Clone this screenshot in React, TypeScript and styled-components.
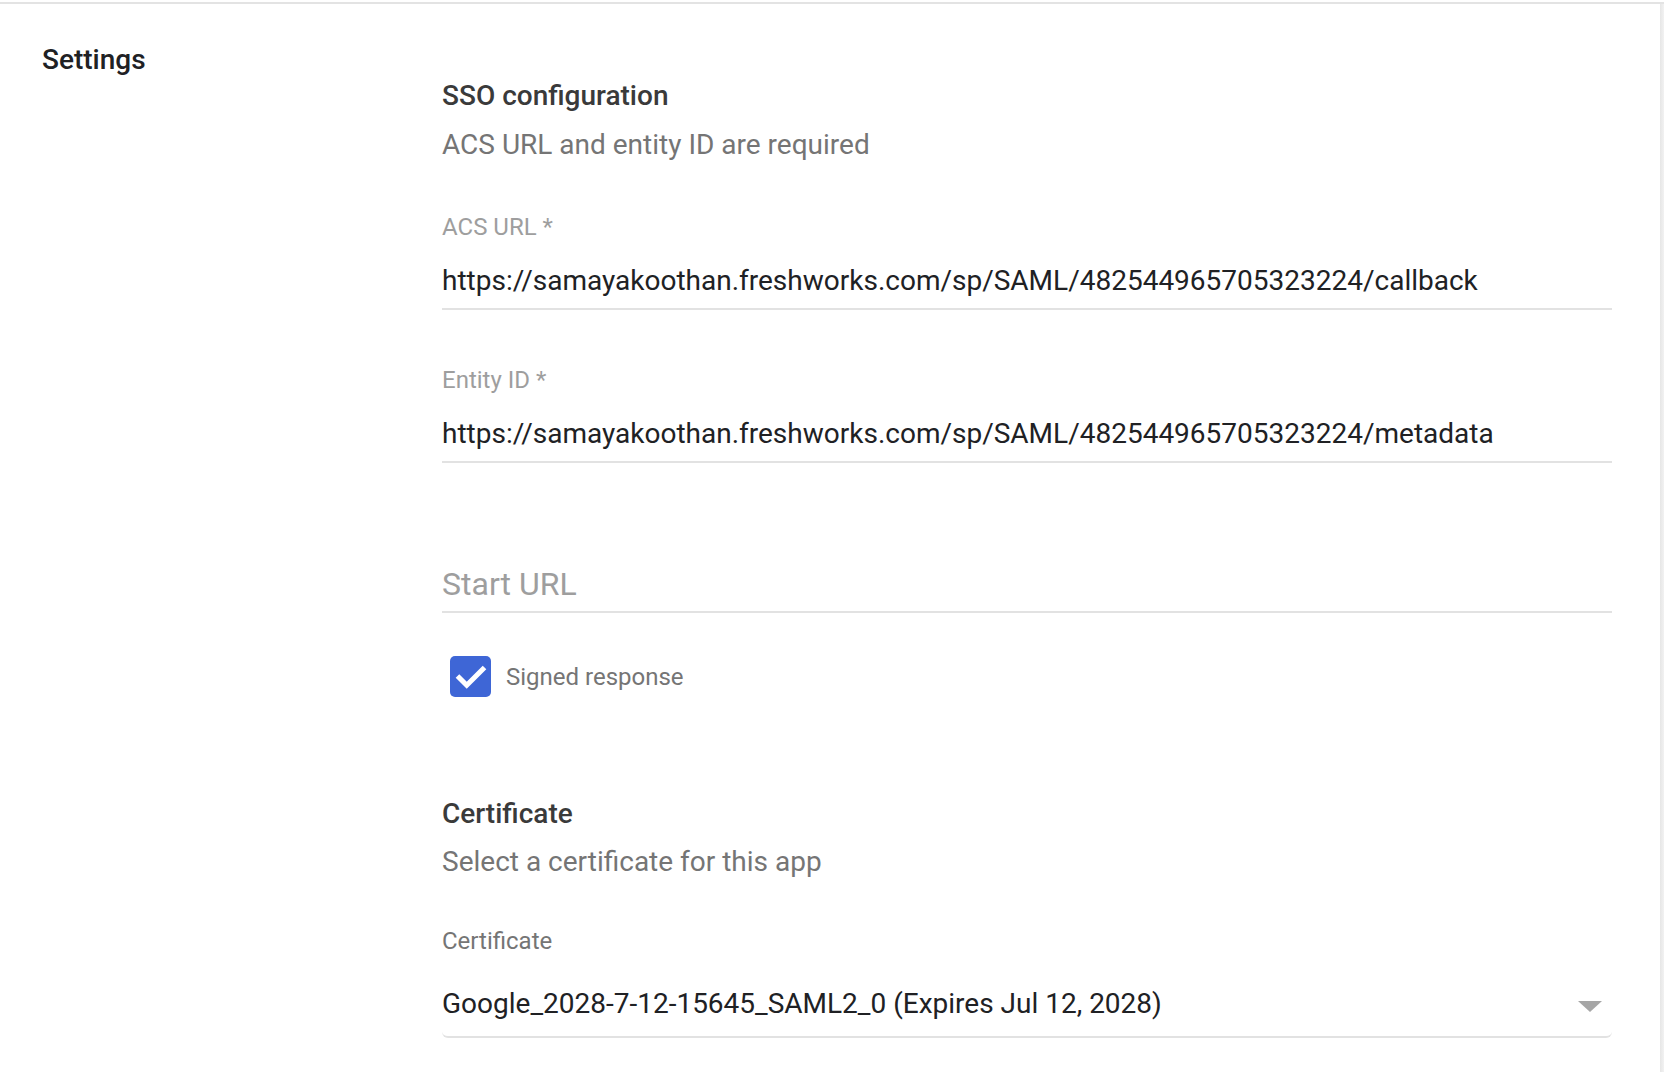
import React from "react";
import styled, { createGlobalStyle } from "styled-components";

const Global = createGlobalStyle`
  html, body { margin: 0; padding: 0; background: #ffffff; }
  body { font-family: Roboto, "Liberation Sans", Arial, sans-serif; -webkit-font-smoothing: antialiased; }
  * { box-sizing: border-box; }
`;

const Card = styled.div`
  margin-top: 2px;
  width: 1664px;
  min-height: 1070px;
  border-top: 2px solid #e3e3e3;
  display: flex;
  position: relative;
  &::after {
    content: "";
    position: absolute;
    top: 0;
    bottom: 0;
    left: 1660px;
    width: 4px;
    background: linear-gradient(to right, #e6e6e6, #f2f2f2);
  }
`;

const SideColumn = styled.div`
  width: 442px;
  padding: 40px 0 0 42px;
  flex-shrink: 0;
`;

const SideTitle = styled.div`
  font-size: 28px;
  line-height: 32px;
  font-weight: 500;
  color: #202124;
`;

const Main = styled.div`
  width: 1170px;
  padding-top: 76px;
  display: flex;
  flex-direction: column;
`;

const SectionTitle = styled.div<{ $mt?: number }>`
  margin-top: ${(p) => p.$mt ?? 0}px;
  font-size: 28px;
  line-height: 32px;
  font-weight: 500;
  color: #3a3a3a;
`;

const SectionDesc = styled.div<{ $mt?: number }>`
  margin-top: ${(p) => p.$mt ?? 16}px;
  font-size: 28px;
  line-height: 32px;
  color: #757575;
`;

const Field = styled.div<{ $mt: number }>`
  margin-top: ${(p) => p.$mt}px;
  display: flex;
  flex-direction: column;
  border-bottom: 2px solid #e2e2e2;
  padding-bottom: 9px;
`;

const FieldLabel = styled.div<{ $dark?: boolean }>`
  font-size: 24px;
  line-height: 28px;
  color: ${(p) => (p.$dark ? "#757575" : "#9e9e9e")};
  margin-bottom: 22px;
`;

const FieldValue = styled.div`
  font-size: 28px;
  line-height: 36px;
  color: #202124;
  white-space: nowrap;
`;

const Placeholder = styled.div`
  font-size: 32px;
  line-height: 36px;
  color: #9e9e9e;
`;

const CheckRow = styled.label`
  margin-top: 43px;
  display: flex;
  align-items: center;
  gap: 15px;
  padding-left: 8px;
`;

const CheckBox = styled.span`
  width: 41px;
  height: 41px;
  border-radius: 5px;
  background: #3e66d6;
  display: flex;
  align-items: center;
  justify-content: center;
`;

const CheckText = styled.span`
  font-size: 24px;
  line-height: 28px;
  color: #757575;
`;

const SelectField = styled.div`
  margin-top: 49px;
  display: flex;
  flex-direction: column;
`;

const SelectBox = styled.div`
  display: flex;
  align-items: center;
  justify-content: space-between;
  padding: 0 10px 14px 0;
  border-bottom: 2px solid #e2e2e2;
  border-radius: 0 0 6px 6px;
`;

const SelectLabel = styled(FieldLabel)`
  margin-bottom: 31px;
`;

const Arrow = styled.span`
  width: 0;
  height: 0;
  border-left: 12px solid transparent;
  border-right: 12px solid transparent;
  border-top: 11px solid #a6a6a6;
  margin-top: 4px;
`;

export default function App() {
  return (
    <>
      <Global />
      <Card>
        <SideColumn>
          <SideTitle>Settings</SideTitle>
        </SideColumn>
        <Main>
          <SectionTitle>SSO configuration</SectionTitle>
          <SectionDesc $mt={17}>ACS URL and entity ID are required</SectionDesc>
          <Field $mt={52}>
            <FieldLabel>ACS URL *</FieldLabel>
            <FieldValue>https://samayakoothan.freshworks.com/sp/SAML/482544965705323224/callback</FieldValue>
          </Field>
          <Field $mt={56}>
            <FieldLabel>Entity ID *</FieldLabel>
            <FieldValue>https://samayakoothan.freshworks.com/sp/SAML/482544965705323224/metadata</FieldValue>
          </Field>
          <Field $mt={103}>
            <Placeholder>Start URL</Placeholder>
          </Field>
          <CheckRow>
            <CheckBox>
              <svg width="32" height="32" viewBox="0 0 24 24" fill="none">
                <path d="M3.2 12.6 L8.8 18.2 L20.8 6.2" stroke="#ffffff" strokeWidth="3.8" strokeLinecap="square" />
              </svg>
            </CheckBox>
            <CheckText>Signed response</CheckText>
          </CheckRow>
          <SectionTitle $mt={101}>Certificate</SectionTitle>
          <SectionDesc>Select a certificate for this app</SectionDesc>
          <SelectField>
            <SelectLabel $dark>Certificate</SelectLabel>
            <SelectBox>
              <FieldValue>Google_2028-7-12-15645_SAML2_0 (Expires Jul 12, 2028)</FieldValue>
              <Arrow />
            </SelectBox>
          </SelectField>
        </Main>
      </Card>
    </>
  );
}
